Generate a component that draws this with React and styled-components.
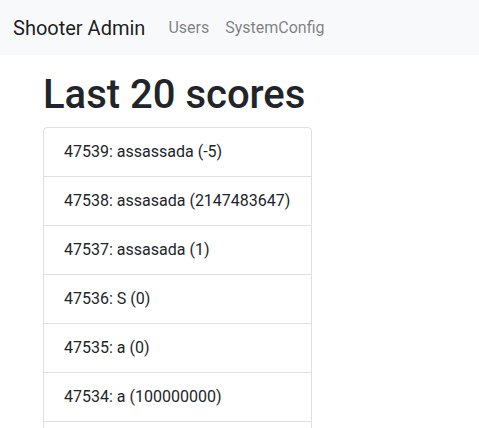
import React from "react";
import styled, { createGlobalStyle } from "styled-components";

const GlobalStyle = createGlobalStyle`
  body {
    margin: 0;
    font-family: Roboto, "Liberation Sans", sans-serif;
    font-size: 16px;
    line-height: 1.5;
    color: #212529;
    background: #fff;
  }
`;

const Navbar = styled.nav`
  display: flex;
  align-items: center;
  height: 55px;
  padding: 0 13px;
  background: #f8f9fa;
`;

const Brand = styled.a`
  font-size: 20px;
  line-height: 30px;
  color: rgba(0, 0, 0, 0.9);
  margin-right: 15px;
  text-decoration: none;
`;

const NavLink = styled.a`
  padding: 8px;
  color: rgba(0, 0, 0, 0.5);
  text-decoration: none;
`;

const Main = styled.main`
  padding: 0 43px;
  display: inline-block;
`;

const Title = styled.h1`
  font-size: 40px;
  font-weight: 500;
  line-height: 1.2;
  margin: 16px 0 8px;
`;

const List = styled.ul`
  list-style: none;
  margin: 0;
  padding: 0;
  min-width: 269px;
  box-sizing: border-box;
  border: 1px solid rgba(0, 0, 0, 0.125);
  border-radius: 4px;
  display: inline-block;
`;

const Item = styled.li`
  padding: 12px 20px;
  border-top: ${(p) => (p.first ? "none" : "1px solid rgba(0, 0, 0, 0.125)")};
  white-space: nowrap;
`;

const scores = [
  [47539, "assassada", -5],
  [47538, "assasada", 2147483647],
  [47537, "assasada", 1],
  [47536, "S", 0],
  [47535, "a", 0],
  [47534, "a", 100000000],
  [47533, "a", 0],
];

export default function App() {
  return (
    <>
      <GlobalStyle />
      <Navbar>
        <Brand href="#">Shooter Admin</Brand>
        <NavLink href="#">Users</NavLink>
        <NavLink href="#">SystemConfig</NavLink>
      </Navbar>
      <Main>
        <Title>Last 20 scores</Title>
        <List>
          {scores.map(([id, name, score], i) => (
            <Item key={id} first={i === 0}>
              {id}: {name} ({score})
            </Item>
          ))}
        </List>
      </Main>
    </>
  );
}
